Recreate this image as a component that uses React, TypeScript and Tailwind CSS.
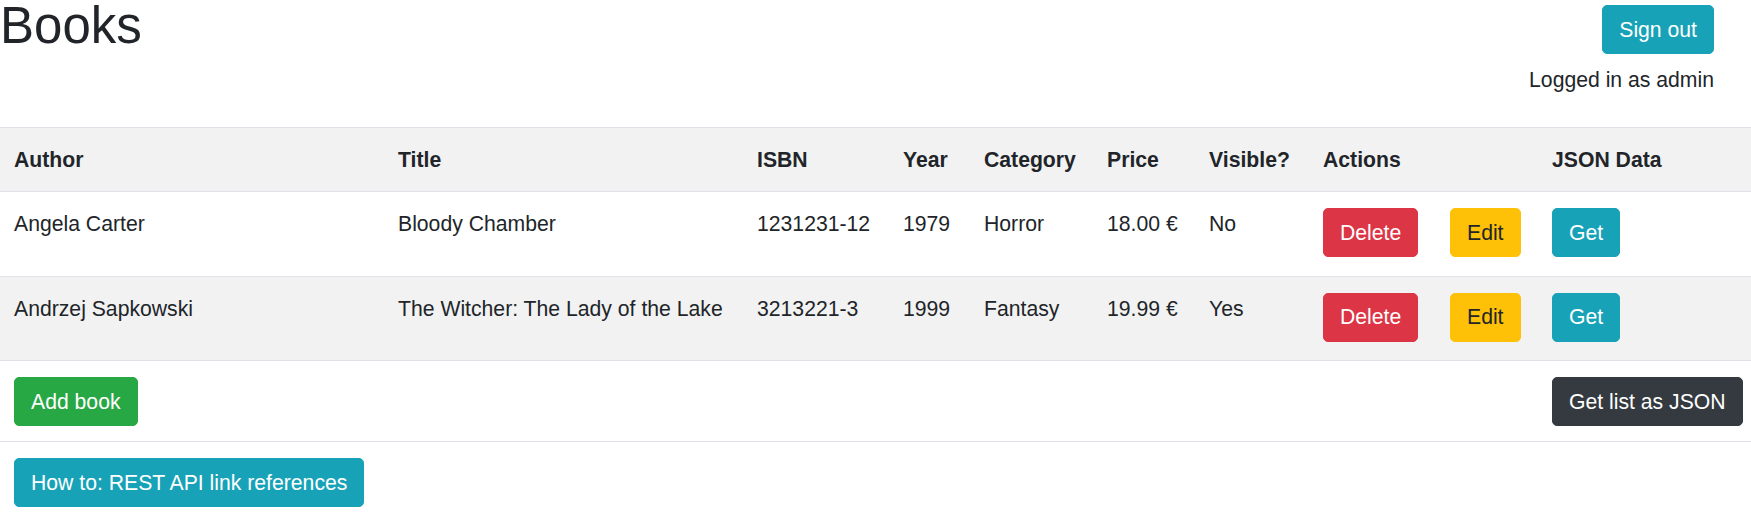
import React from 'react'

const books = [
    { author: 'Angela Carter', title: 'Bloody Chamber', isbn: '1231231-12', year: '1979', category: 'Horror', price: '18.00 €', visible: 'No' },
    { author: 'Andrzej Sapkowski', title: 'The Witcher: The Lady of the Lake', isbn: '3213221-3', year: '1999', category: 'Fantasy', price: '19.99 €', visible: 'Yes' },
]

const btn = 'inline-flex items-center h-[49px] px-[16px] border rounded-[5px] whitespace-nowrap'
const th = 'text-left align-top font-bold pl-[14px] pt-[16px] pb-[15px]'
const td = 'align-top pl-[14px] pt-[16px] pb-[18.5px]'

export default function App() {
    return (
        <div className="bg-white text-[#212529] font-['Liberation_Sans',Arial,sans-serif] text-[21.2px] leading-[32px] w-[1751px] h-[514px] overflow-hidden">
            <div className="flex justify-between h-[127px]">
                <h1 className="text-[51px] leading-none font-normal">Books</h1>
                <div className="flex flex-col items-end pr-[37px] pt-[5px]">
                    <button className={`${btn} bg-[#17a2b8] border-[#17a2b8] text-white`}>Sign out</button>
                    <p className="mt-[10px]">Logged in as admin</p>
                </div>
            </div>

            <table className="w-full table-fixed border-collapse">
                <colgroup>
                    <col className="w-[384px]" />
                    <col className="w-[359px]" />
                    <col className="w-[146px]" />
                    <col className="w-[81px]" />
                    <col className="w-[123px]" />
                    <col className="w-[102px]" />
                    <col className="w-[114px]" />
                    <col className="w-[127px]" />
                    <col className="w-[102px]" />
                    <col className="w-[213px]" />
                </colgroup>
                <thead>
                    <tr className="bg-[#f2f2f2] border-t border-[#dee2e6]">
                        <th className={th}>Author</th>
                        <th className={th}>Title</th>
                        <th className={th}>ISBN</th>
                        <th className={th}>Year</th>
                        <th className={th}>Category</th>
                        <th className={th}>Price</th>
                        <th className={th}>Visible?</th>
                        <th className={th}>Actions</th>
                        <th className={th}></th>
                        <th className={th}>JSON Data</th>
                    </tr>
                </thead>
                <tbody>
                    {books.map((b, i) => (
                        <tr key={b.isbn} className={`border-t border-[#dee2e6] ${i % 2 === 1 ? 'bg-[#f2f2f2]' : 'bg-white'}`}>
                            <td className={td}>{b.author}</td>
                            <td className={td}>{b.title}</td>
                            <td className={td}>{b.isbn}</td>
                            <td className={td}>{b.year}</td>
                            <td className={td}>{b.category}</td>
                            <td className={td}>{b.price}</td>
                            <td className={td}>{b.visible}</td>
                            <td className={td}>
                                <button className={`${btn} bg-[#dc3545] border-[#dc3545] text-white`}>Delete</button>
                            </td>
                            <td className={td}>
                                <button className={`${btn} bg-[#ffc107] border-[#ffc107] text-[#212529]`}>Edit</button>
                            </td>
                            <td className={td}>
                                <button className={`${btn} bg-[#17a2b8] border-[#17a2b8] text-white`}>Get</button>
                            </td>
                        </tr>
                    ))}
                    <tr className="border-t border-[#dee2e6]">
                        <td className="align-top pl-[14px] pt-[16px] pb-[15px]">
                            <button className={`${btn} bg-[#28a745] border-[#28a745] text-white`}>Add book</button>
                        </td>
                        <td colSpan={8}></td>
                        <td className="align-top pl-[14px] pt-[16px] pb-[15px]">
                            <button className={`${btn} bg-[#343a40] border-[#343a40] text-white`}>Get list as JSON</button>
                        </td>
                    </tr>
                    <tr className="border-t border-[#dee2e6]">
                        <td colSpan={3} className="align-top pl-[14px] pt-[16px] pb-[16px]">
                            <button className={`${btn} bg-[#17a2b8] border-[#17a2b8] text-white`}>How to: REST API link references</button>
                        </td>
                        <td colSpan={7}></td>
                    </tr>
                </tbody>
            </table>
        </div>
    )
}
